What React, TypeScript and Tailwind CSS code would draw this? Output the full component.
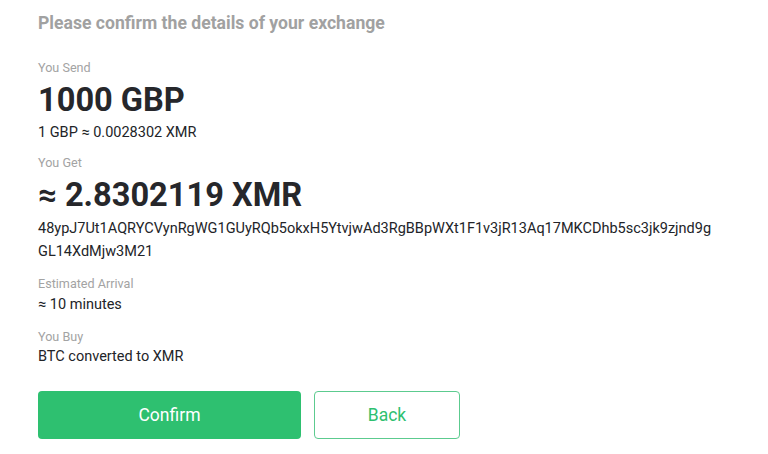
import React from 'react';

const Label: React.FC<{ children: React.ReactNode }> = ({ children }) => (
  <div className="text-[12.6px] leading-[16px] text-[#a3a3a3]">{children}</div>
);

export default function App() {
  return (
    <div className="w-[768px] h-[454px] bg-white font-['Roboto',sans-serif] text-[#222428] overflow-hidden">
      <div className="pl-[38px] pr-[40px] pt-[12px]">
        <h1 className="text-[17.6px] leading-[22px] font-bold text-[#a1a1a1]">
          Please confirm the details of your exchange
        </h1>

        {/* You send */}
        <div className="mt-[26px]">
          <Label>You Send</Label>
          <div className="mt-[5px] text-[32.6px] leading-[38px] font-bold text-[#26272b]">1000 GBP</div>
          <div className="mt-[5px] text-[14.5px] leading-[18px]">1 GBP ≈ 0.0028302 XMR</div>
        </div>

        {/* You get */}
        <div className="mt-[13px]">
          <Label>You Get</Label>
          <div className="mt-[5px] text-[32.6px] leading-[38px] font-bold text-[#26272b]">≈ 2.8302119 XMR</div>
          <div className="mt-[3px] text-[14.5px] leading-[23px]">
            <div>48ypJ7Ut1AQRYCVynRgWG1GUyRQb5okxH5YtvjwAd3RgBBpWXt1F1v3jR13Aq17MKCDhb5sc3jk9zjnd9g</div>
            <div>GL14XdMjw3M21</div>
          </div>
        </div>

        <div className="mt-[13px]">
          <Label>Estimated Arrival</Label>
          <div className="mt-[4px] text-[14.5px] leading-[18px]">≈ 10 minutes</div>
        </div>

        <div className="mt-[15px]">
          <Label>You Buy</Label>
          <div className="mt-[3px] text-[14.5px] leading-[18px]">BTC converted to XMR</div>
        </div>

        <div className="mt-[25px] flex gap-[13px]">
          <button className="w-[263px] h-[48px] rounded-[4px] bg-[#2ec070] text-white text-[17.5px]">
            Confirm
          </button>
          <button className="w-[146px] h-[48px] rounded-[4px] border border-[#5ccb8f] bg-white text-[#2ec070] text-[17.5px]">
            Back
          </button>
        </div>
      </div>
    </div>
  );
}
